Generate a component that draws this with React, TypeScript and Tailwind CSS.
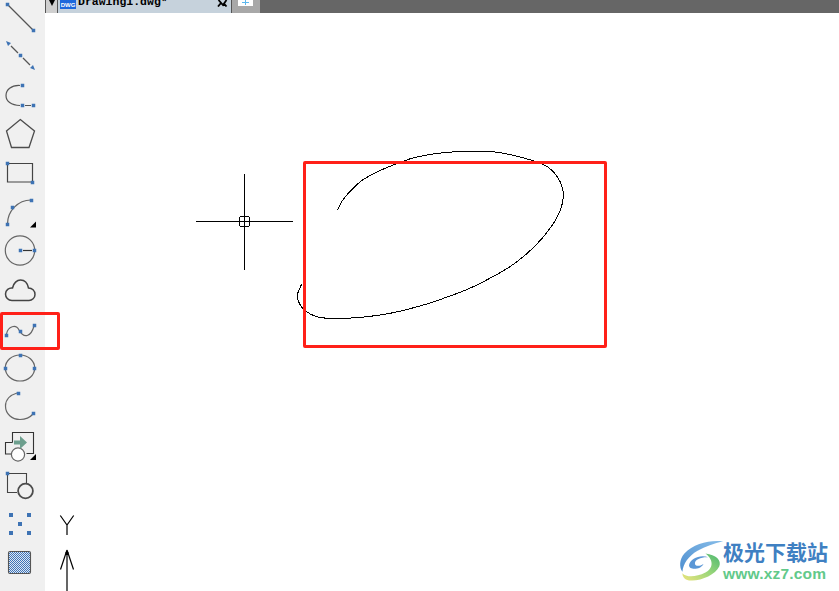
import React from 'react';

const stroke = '#555555';

const Dot = ({ x, y, s = 3.5 }: { x: number; y: number; s?: number }) => (
    <rect x={x - s / 2} y={y - s / 2} width={s} height={s} fill="#3e73b4" />
);

// every tool is drawn in page coordinates, the viewBox moves with the row
const tools: React.ReactNode[] = [
    <>
        <path d="M8 5L33 30" stroke={stroke} strokeWidth="1.3" fill="none" />
        <Dot x={7.5} y={4.5} />
        <Dot x={33.5} y={30.5} />
    </>,
    <>
        <path d="M11 46L18 53M23 58L30 65" stroke={stroke} strokeWidth="1.3" fill="none" />
        <path d="M6 41L11 43L8 46Z M35 70L30 68L33 65Z" fill="#3e73b4" />
        <Dot x={20.5} y={55.5} />
    </>,
    <>
        <path d="M20 85.5C11 85 6 90 6 95.5C6 101 11 105.5 20 105.5M25 105.5H31" stroke={stroke} strokeWidth="1.2" fill="none" />
        <Dot x={22.5} y={85.5} />
        <Dot x={22.5} y={105.5} />
        <Dot x={33.5} y={105.5} />
    </>,
    <path d="M20.3 119.5L34.5 131L29 147.5H11.5L6.5 131Z" stroke="#4c4c4c" strokeWidth="1.3" fill="none" />,
    <>
        <path d="M7.5 163.5H32.5V182H7.5Z" stroke="#444444" strokeWidth="1.2" fill="none" />
        <Dot x={7.5} y={163.5} />
        <Dot x={32.5} y={182.5} />
    </>,
    <>
        <path d="M7.5 224C7.5 211 18 200 31 200" stroke="#666666" strokeWidth="1.2" fill="none" />
        <Dot x={7.5} y={224.5} />
        <Dot x={12.5} y={207.5} />
        <Dot x={31.5} y={200.5} />
        <path d="M30 227.5H36V221.5Z" fill="#000000" />
    </>,
    <>
        <circle cx="20" cy="250.5" r="14.7" stroke="#666666" strokeWidth="1.2" fill="none" />
        <path d="M23 250.5H32" stroke="#333333" strokeWidth="1.2" />
        <Dot x={20.5} y={250.5} />
        <Dot x={34.5} y={250.5} />
    </>,
    <path d="M12 300.5C8 300.5 5.5 297.5 5.5 294C5.5 290 9 287.5 12.5 288C13.5 283 17 280 20.5 280C24.5 280 27.5 283 28.5 288C32 288 35 290.5 35 294.5C35 298 32 300.5 29 300.5Z" stroke="#444444" strokeWidth="1.5" fill="none" />,
    <>
        <path d="M6.5 334C8 326 16 324 19 330C24 339 31 337 34 326" stroke="#666666" strokeWidth="1.2" fill="none" />
        <Dot x={6.5} y={335.5} />
        <Dot x={20.5} y={331.5} />
        <Dot x={34.5} y={325.5} />
    </>,
    <>
        <ellipse cx="20" cy="368" rx="14.7" ry="13" stroke="#666666" strokeWidth="1.2" fill="none" />
        <Dot x={20.5} y={355.5} />
        <Dot x={5.5} y={368.5} />
        <Dot x={34.5} y={368.5} />
    </>,
    <>
        <path d="M17 393C10 395 5.5 400 5.5 406C5.5 414 12 419.5 20 419.5C25 419.5 30 417.5 33 414" stroke="#666666" strokeWidth="1.2" fill="none" />
        <Dot x={18.5} y={393.5} />
        <Dot x={33.5} y={413.5} />
    </>,
    <>
        <path d="M12.5 442.5V432.5H33.5V453.5H26.5M12.5 442.5H5.5V454H11" stroke="#333333" strokeWidth="1.1" fill="none" />
        <circle cx="18" cy="454.5" r="6.6" stroke="#666666" strokeWidth="1.2" fill="#ffffff" />
        <path d="M14 440.5H20V436L27 442.5L20 449V444.5H14Z" fill="#6d9f8e" />
        <path d="M30 460H36V454Z" fill="#000000" />
    </>,
    <>
        <path d="M7.5 473.5H26.5V483M7.5 473.5V492.5H17" stroke="#444444" strokeWidth="1.1" fill="none" />
        <circle cx="25.5" cy="491" r="7.4" stroke="#4c4c4c" strokeWidth="1.8" fill="none" />
        <Dot x={7.5} y={473.5} />
    </>,
    <>
        <Dot x={11} y={515} s={4} />
        <Dot x={29} y={515} s={4} />
        <Dot x={20} y={524} s={4} />
        <Dot x={11} y={533} s={4} />
        <Dot x={29} y={533} s={4} />
    </>,
    <>
        <defs>
            <pattern id="hatch" width="2" height="2" patternUnits="userSpaceOnUse">
                <rect width="2" height="2" fill="#dfe8f3" />
                <rect width="1" height="1" fill="#3f74b8" />
                <rect x="1" y="1" width="1" height="1" fill="#3f74b8" />
            </pattern>
        </defs>
        <rect x="8.5" y="551.5" width="22" height="22" rx="1.5" fill="url(#hatch)" stroke="#555555" strokeWidth="1.1" />
    </>,
];

// catmull-rom through the points picked off the sketch
const curve = (pts: number[][]) => {
    let d = `M${pts[0][0]} ${pts[0][1]}`;
    for (let i = 0; i < pts.length - 1; i++) {
        const a = pts[i - 1] || pts[i];
        const b = pts[i];
        const c = pts[i + 1];
        const e = pts[i + 2] || c;
        d += `C${b[0] + (c[0] - a[0]) / 6} ${b[1] + (c[1] - a[1]) / 6} ${c[0] - (e[0] - b[0]) / 6} ${c[1] - (e[1] - b[1]) / 6} ${c[0]} ${c[1]}`;
    }
    return d;
};

const sketch = curve(
    [
        [442, 211], [456, 184], [482, 152], [518, 120], [565, 94], [620, 71], [680, 51], [760, 38],
        [860, 33], [930, 38], [1030, 62], [1075, 82], [1105, 115], [1120, 160], [1112, 208], [1085, 258],
        [1035, 318], [960, 380], [850, 440], [780, 468], [700, 495], [600, 520], [500, 533], [420, 535],
        [380, 530], [345, 512], [328, 490], [322, 465], [335, 432],
    ].map(([x, y]) => [x / 3 + 190, y / 3 + 140]),
);

const Tabs = () => (
    <div className="flex h-[13px] overflow-hidden bg-[#666666]">
        <div className="w-px bg-[#555555]" />
        <div className="flex w-[11px] justify-center bg-[#cfcfcf]">
            <svg width="8" height="7" viewBox="0 0 8 7"><path d="M1 0H7L4 6Z" fill="#000000" /></svg>
        </div>
        <div className="w-px bg-[#555555]" />
        <div className="flex w-[173px] items-start bg-[#c6d2dc]">
            <div className="ml-[2px] flex h-[9px] w-[16px] items-center justify-center overflow-hidden bg-[#1c68dc] font-['Liberation_Sans',sans-serif] text-[6px] leading-none font-bold text-white">
                DWG
            </div>
            <span className="-mt-[6px] ml-[2px] w-[118px] font-['Liberation_Mono',monospace] text-[11.5px] leading-[16px] font-bold whitespace-nowrap text-black">
                Drawing1.dwg*
            </span>
            <svg className="ml-[21px]" width="11" height="7" viewBox="0 0 11 7">
                <path d="M1.5 0L6 5L9.5 0M1 6.5L4 3M9.5 6.5L7 3.5" stroke="#000000" strokeWidth="1.8" fill="none" />
            </svg>
        </div>
        <div className="w-px bg-[#555555]" />
        <div className="w-[28px] bg-[#a8a8a8] pl-[6px]">
            <div className="relative h-[6px] w-[15px] bg-white">
                <span className="absolute top-0 left-[7px] h-[5px] w-px bg-[#5cb8ee]" />
                <span className="absolute top-[2px] left-[4px] h-px w-[7px] bg-[#5cb8ee]" />
            </div>
        </div>
    </div>
);

const Logo = () => (
    <div className="absolute right-[11px] bottom-[7px] flex items-center">
        <svg width="48" height="46" viewBox="20 25 145 140">
            <defs>
                <linearGradient id="swoosh" x1="0" y1="1" x2="1" y2="0">
                    <stop offset="0" stopColor="#4e8fd0" />
                    <stop offset="1" stopColor="#86bce8" />
                </linearGradient>
                <linearGradient id="swoosh2" x1="0" y1="1" x2="1" y2="0">
                    <stop offset="0" stopColor="#ece47c" />
                    <stop offset="0.5" stopColor="#9ad67a" />
                    <stop offset="1" stopColor="#4cb870" />
                </linearGradient>
            </defs>
            <path d="M160 35C120 30 70 42 42 72C26 90 26 114 36 128C38 104 54 80 82 64C106 50 132 42 160 35Z" fill="url(#swoosh)" />
            <path d="M56 108C60 86 92 74 116 84C96 82 74 90 74 102C74 112 88 112 100 104C92 122 56 124 56 108Z" fill="#5b97d6" />
            <path d="M106 72C138 76 156 92 148 112C136 138 90 158 56 154C42 152 36 142 36 132C48 146 78 144 106 130C128 118 134 94 106 72Z" fill="url(#swoosh2)" />
        </svg>
        <div className="-ml-[2px] flex flex-col items-start">
            <span className="font-['Noto_Sans_CJK_SC',sans-serif] text-[21px] leading-[25px] font-bold text-[#3f80c2]">极光下载站</span>
            <span className="font-['Liberation_Sans',sans-serif] text-[15.5px] leading-[19px] font-bold tracking-[0.2px] text-[#62c98a]">www.xz7.com</span>
        </div>
    </div>
);

export default function App() {
    return (
        <div className="relative flex h-[591px] w-[839px] overflow-hidden bg-white">
            <div className="w-[45px] shrink-0 bg-[#f0f0f0]">
                {tools.map((t, i) => (
                    <svg key={i} className="block overflow-visible" width="45" height="39" viewBox={`0 ${i * 39} 45 39`}>
                        {t}
                    </svg>
                ))}
            </div>
            <div className="relative flex-1">
                <Tabs />
                <svg className="absolute top-[13px] left-0" width="794" height="578" viewBox="45 13 794 578">
                    <path d={sketch} stroke="#000000" strokeWidth="1" fill="none" shapeRendering="crispEdges" />
                    <g stroke="#000000" strokeWidth="1" fill="none" shapeRendering="crispEdges">
                        <path d="M196 221.5H293M244.5 174V270M244.5 216V227M239 221.5H250" />
                        <rect x="239.5" y="216.5" width="10" height="10" rx="2" />
                    </g>
                    <g stroke="#000000" strokeWidth="1.2" fill="none">
                        <path d="M60.3 515.5L67 525L73.7 515.5M67 525V535" />
                        <path d="M67 550V591M67 550L60.5 569.5M67 550L73.5 569.5" />
                    </g>
                    <rect x="65.5" y="552" width="3" height="3" fill="#000000" />
                </svg>
            </div>
            <div className="absolute top-[161px] left-[303px] h-[187px] w-[304px] rounded-[2px] border-[3px] border-[#ff2018]" />
            <div className="absolute top-[312px] left-0 h-[38px] w-[60px] rounded-[2px] border-[3px] border-[#ff2018]" />
            <Logo />
        </div>
    );
}
